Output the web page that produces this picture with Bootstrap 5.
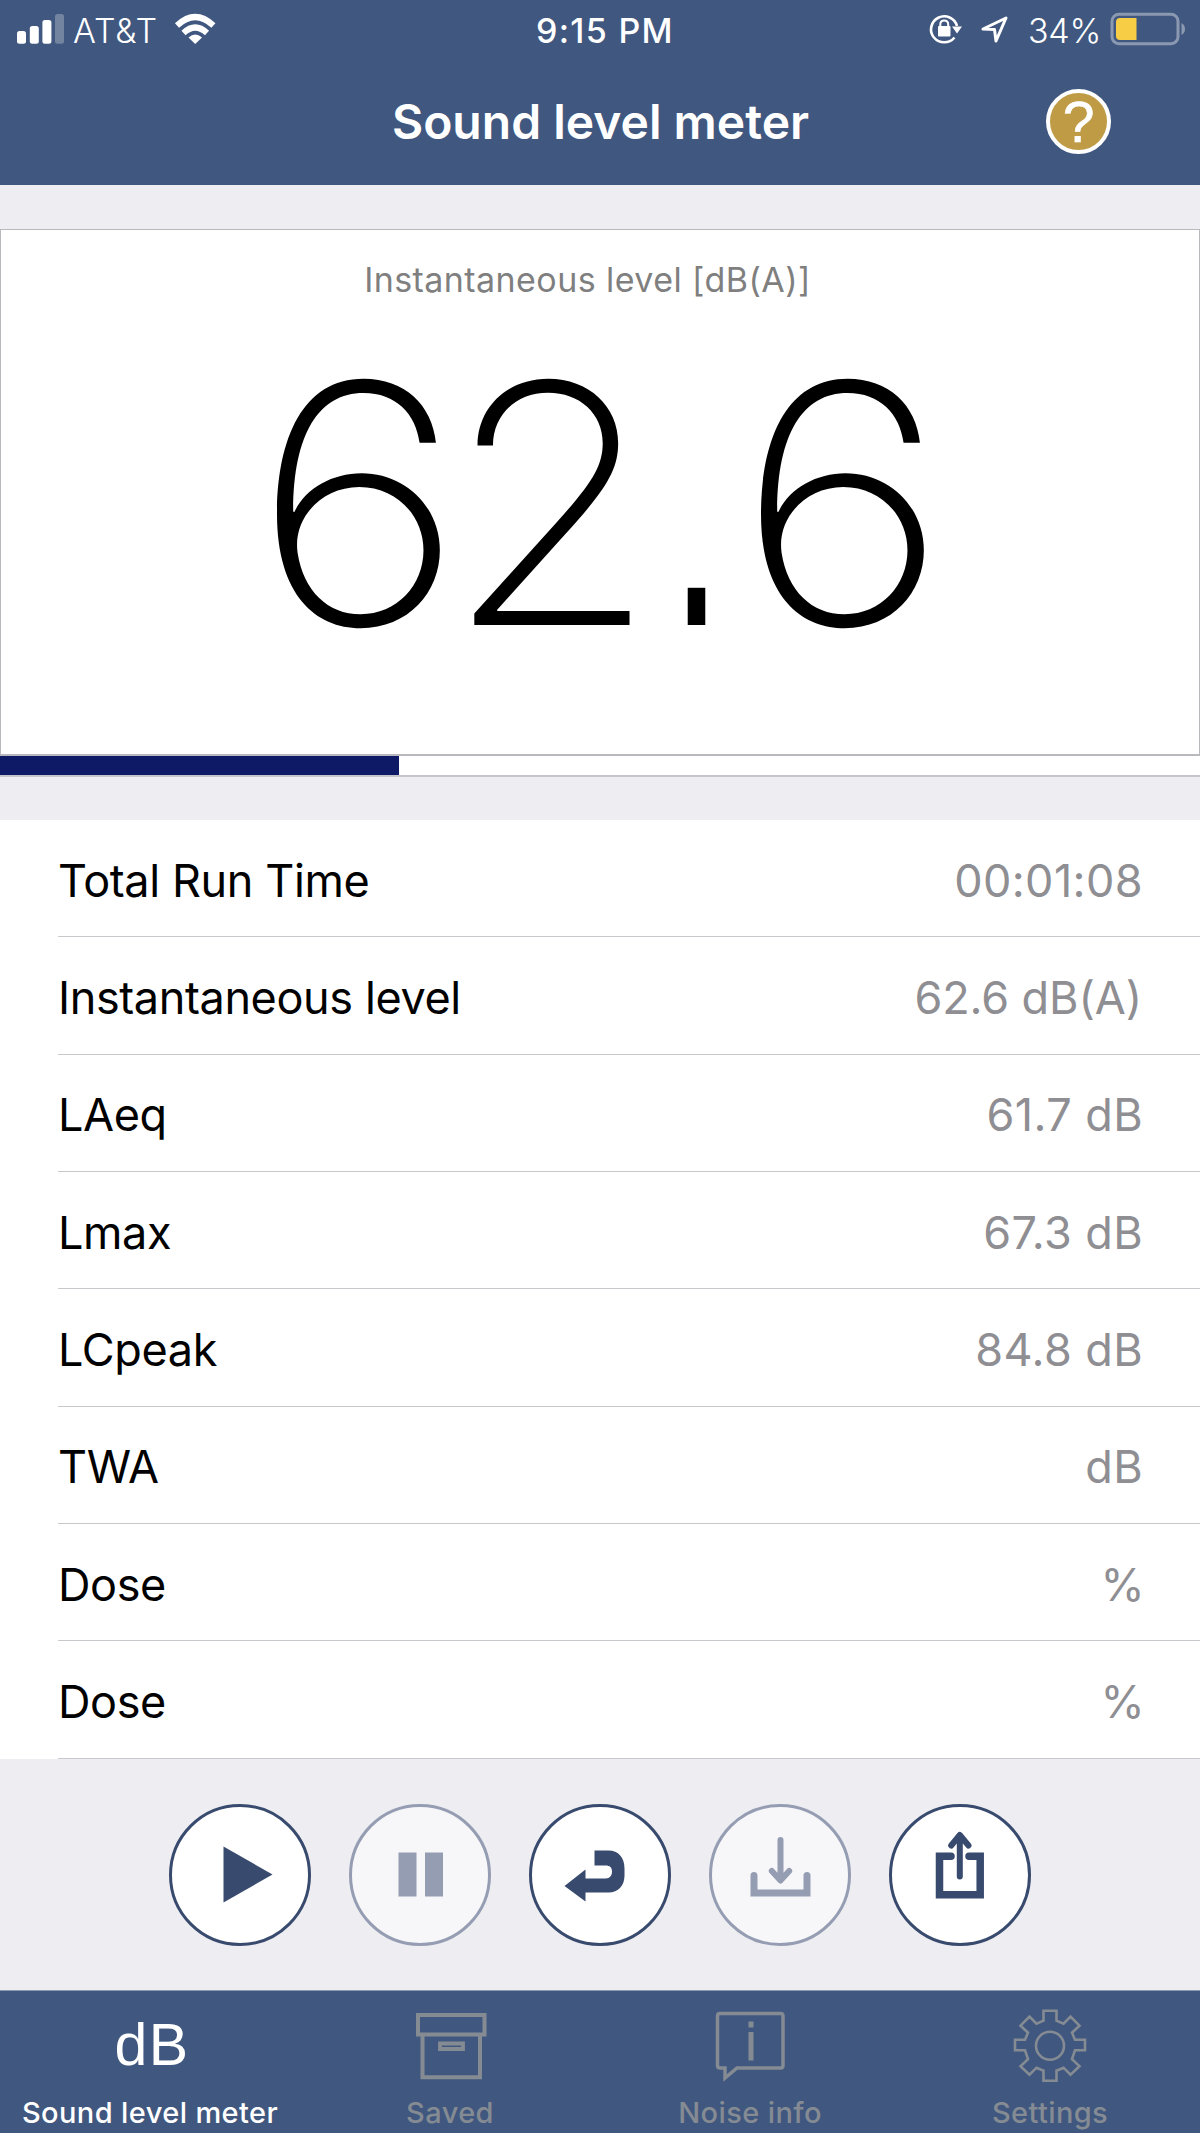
<!DOCTYPE html>
<html lang="en">
<head>
<meta charset="utf-8">
<meta name="viewport" content="width=device-width, initial-scale=1">
<title>Sound level meter</title>
<link href="https://cdn.jsdelivr.net/npm/bootstrap@5.3.0/dist/css/bootstrap.min.css" rel="stylesheet">
<style>
  :root { --navy: #40577f; --ink: #384a6e; --canvas: #eeedf2; --rule: #c8c7cc; }
  body { font-family: Inter, "Liberation Sans", sans-serif; background: var(--canvas); color: #000; }
  .screen { width: 1200px; height: 2133px; overflow: hidden; }
  svg { display: block; flex: none; }
  .app-head { height: 185px; background: var(--navy); color: #fff; }
  .status { height: 60px; font-size: 34px; line-height: 60px; padding: 0 15px 0 17px; }
  .status > div { width: 33.333%; }
  .status span { padding-top: 1px; }
  .carrier { font-weight: 300; letter-spacing: .9px; margin: 0 16px 0 8px; }
  .battery-text { font-weight: 300; letter-spacing: -.3px; margin: 0 8px 0 18px; }
  .clock { font-weight: 500; letter-spacing: 1.3px; padding: 1px 0 0 8px; }
  .title-bar { height: 125px; padding-right: 89px; padding-left: 154px; padding-bottom: 2px; }
  .title-bar h1 { font-size: 48px; font-weight: 600; line-height: 60px; padding-left: 1px; }
  .help { width: 65px; height: 65px; border: 4px solid #fff; background: #bf9b45; color: #fff;
          font: 400 57px/58px "Liberation Sans", sans-serif; -webkit-text-stroke: .6px #fff; }
  .gap-band { height: 44px; }
  .reading { height: 527px; border: 1px solid #b9b9bd; border-bottom-width: 2px; border-radius: 0; }
  .caption-text { color: #7f7f7f; font-size: 34px; line-height: 44px; letter-spacing: .43px; padding: 28px 25px 0 0; }
  .digits { font-size: 334px; font-weight: 200; line-height: 400px; height: 400px; margin-top: 2px; }
  .digits span { display: inline-block; width: 193.5px; text-align: center; }
  .digits .six { transform: scaleX(1.09); }
  .digits .two { margin: 0 7px 0 -7px; transform: scaleX(1.04); }
  .digits .point { width: 97px; font: 400 348px/402px "Liberation Sans", sans-serif; transform: scaleX(.53); }
  .level { height: 21px; background: #fff; border-radius: 0; border-bottom: 2px solid #c4c4ca; }
  .level .progress-bar { background: #0f1a67; }
  .band-bottom { height: 43px; }
  .stats { padding-left: 58px; background: #fff; }
  .stats li { height: 117.33px; border-bottom: 1px solid var(--rule); font-size: 45px; line-height: 60px; padding: 5px 57px 0 0; }
  .stats li span:first-child { letter-spacing: -.38px; }
  .stats li span:last-child { color: #8e8e93; letter-spacing: .4px; }
  .stats li span.tight:last-child { letter-spacing: -.1px; padding-right: 1px; }
  .stats li .unit { margin-right: -2px; }
  .controls { gap: 38px; height: 231px; padding-top: 1px; }
  .round-btn { width: 142px; height: 142px; border: 3px solid var(--ink); border-radius: 50%; background: #fff;
               color: var(--ink); padding: 0; }
  .round-btn svg { margin: -.5px; }
  .round-btn:disabled { border: 3px solid #959db3; background: #f7f7fa; color: #959db3; opacity: 1; }
  .tabs { height: 143px; background: var(--navy); border-top: 1px solid #8c9ab3; color: #858b93;
          font-size: 29px; font-weight: 500; letter-spacing: .4px; line-height: 36px; }
  .tabs a { width: 300px; color: inherit; text-decoration: none; }
  .tabs a.active { color: #fff; }
  .tab-icon { height: 104.5px; padding-top: 2px; }
  .db { font: 400 59px/100px "Liberation Sans", sans-serif; letter-spacing: 1.5px; padding: 4px 0 0 4px; }
</style>
<script src="https://cdn.jsdelivr.net/npm/bootstrap@5.3.0/dist/js/bootstrap.bundle.min.js"></script>
</head>
<body>
<main class="screen d-flex flex-column">
  <header class="app-head">
    <div class="status d-flex align-items-center">
      <div class="d-flex align-items-center">
        <svg width="48" height="60" viewBox="17 0 48 60" fill="#fff"><rect x="17" y="31" width="9" height="12.7" rx="2.5"/><rect x="29.8" y="26" width="9" height="17.7" rx="2.5"/><rect x="42.4" y="20" width="9" height="23.7" rx="2.5"/><rect x="55" y="14" width="9" height="29.7" rx="2.5" opacity=".27"/></svg>
        <span class="carrier">AT&amp;T</span>
        <svg width="42" height="60" viewBox="173 0 42 60"><g fill="none" stroke="#fff" stroke-width="6"><path d="M176 25.500Q194.200 8.500 212.400 25.500"/><path d="M182.500 33Q194.200 22 206 33"/></g><path fill="#fff" d="M194.200 44L187.500 37.500Q194.200 31.500 201 37.500Z"/></svg>
      </div>
      <div class="clock text-center">9:15 PM</div>
      <div class="d-flex align-items-center justify-content-end">
        <svg width="82" height="60" viewBox="928 0 82 60"><path d="M954.500 37.500A13.200 13 0 1 1 957 26" fill="none" stroke="#fff" stroke-width="2.600"/><path d="M952 26.500H962L957 33.500Z" fill="#fff"/><rect x="938" y="26" width="12.500" height="10.500" rx="1" fill="#fff"/><path d="M940.300 27V24.500Q940.300 20.500 944.200 20.500T948.200 24.500V27" fill="none" stroke="#fff" stroke-width="2"/><path d="M983 29L1006 18L996 41L994.500 29.500Z" fill="none" stroke="#fff" stroke-width="3" stroke-linejoin="round"/></svg>
        <span class="battery-text">34%</span>
        <svg width="76" height="60" viewBox="1109 0 76 60"><rect x="1112" y="14.200" width="66" height="29.500" rx="7" fill="none" stroke="#8b98b1" stroke-width="3"/><path d="M1181.500 23Q1185 25 1185 29T1181.500 35Z" fill="#8b98b1"/><path d="M1136.500 18V40H1120Q1116 40 1116 36V22Q1116 18 1120 18Z" fill="#f8cd46"/></svg>
      </div>
    </div>
    <div class="title-bar d-flex align-items-center justify-content-between">
      <h1 class="m-0 flex-grow-1 text-center">Sound level meter</h1>
      <div class="help rounded-circle text-center">?</div>
    </div>
  </header>
  <div class="gap-band"></div>
  <section class="card reading">
    <div class="caption-text text-center">Instantaneous level [dB(A)]</div>
    <div class="digits d-flex justify-content-center"><span class="six">6</span><span class="two">2</span><span class="point">.</span><span class="six">6</span></div>
  </section>
  <div class="progress level"><div class="progress-bar" style="width:33.25%"></div></div>
  <div class="band-bottom"></div>
  <ul class="stats list-unstyled m-0">
    <li class="d-flex justify-content-between align-items-center"><span>Total Run Time</span><span>00:01:08</span></li>
    <li class="d-flex justify-content-between align-items-center"><span>Instantaneous level</span><span class="tight">62.6 dB(A)</span></li>
    <li class="d-flex justify-content-between align-items-center"><span>LAeq</span><span>61.7 dB</span></li>
    <li class="d-flex justify-content-between align-items-center"><span>Lmax</span><span>67.3 dB</span></li>
    <li class="d-flex justify-content-between align-items-center"><span>LCpeak</span><span>84.8 dB</span></li>
    <li class="d-flex justify-content-between align-items-center"><span>TWA</span><span>dB</span></li>
    <li class="d-flex justify-content-between align-items-center"><span>Dose</span><span class="unit">%</span></li>
    <li class="d-flex justify-content-between align-items-center"><span>Dose</span><span class="unit">%</span></li>
  </ul>
  <div class="controls d-flex justify-content-center align-items-center">
    <button class="round-btn" aria-label="Start"><svg width="137" height="137" viewBox="-68.500 -68.500 137 137" fill="currentColor"><path d="M-17 -28L32 0L-17 28Z"/></svg></button>
    <button class="round-btn" aria-label="Pause" disabled><svg width="137" height="137" viewBox="-68.500 -68.500 137 137" fill="currentColor"><path d="M-22 -22H-4V22H-22ZM4.500 -22H22.500V22H4.500Z"/></svg></button>
    <button class="round-btn" aria-label="Reset"><svg width="137" height="137" viewBox="-68.500 -68.500 137 137" fill="currentColor"><path d="M-6 -24H8C18 -24 24 -17 24 -6V1C24 11 18 18 8 18H-15V27L-36 11.500L-15 -5V4H5C9.500 4 11.500 1 11.500 -3C11.500 -7 9.500 -9 5 -9H-6Z"/></svg></button>
    <button class="round-btn" aria-label="Save" disabled><svg width="137" height="137" viewBox="-68.500 -68.500 137 137" fill="none" stroke="currentColor" stroke-linecap="round"><path stroke-width="7" d="M-26.500 1V18.500H26.500V1"/><path stroke-width="6" stroke-linejoin="round" d="M0 -34.500V5.500M-8.700 -3.500L0 6L8.700 -3.500"/></svg></button>
    <button class="round-btn" aria-label="Share"><svg width="137" height="137" viewBox="-68.500 -68.500 137 137" fill="none" stroke="currentColor" stroke-linecap="round"><path stroke-width="7.500" d="M-9.500 -18.300H-21V20.200H19.700V-18.300H8.500"/><path stroke-width="6" stroke-linejoin="round" d="M-.7 2V-38M-9.300 -29L-.7 -39.500L8 -29"/></svg></button>
  </div>
  <nav class="tabs d-flex text-center">
    <a class="active" href="#"><div class="tab-icon db">dB</div>Sound level meter</a>
    <a href="#"><div class="tab-icon d-flex justify-content-center"><svg width="74" height="92" viewBox="413 1993 74 92" fill="none" stroke="currentColor" stroke-width="4"><path d="M418 2015H484.500V2034.500H418ZM422.500 2034.500V2077.200H480V2034.500"/><path d="M440 2043.500H463V2049H440Z" stroke-width="3.800"/></svg></div>Saved</a>
    <a href="#"><div class="tab-icon d-flex justify-content-center"><svg width="72" height="92" viewBox="714 1993 72 92" fill="none" stroke="currentColor" stroke-width="3.500"><path d="M720 2013.500H780.500Q783 2013.500 783 2016V2065.500Q783 2068 780.500 2068H737L725 2078V2068H720Q717.500 2068 717.500 2065.500V2016Q717.500 2013.500 720 2013.500Z"/><path d="M751 2021.500V2027.500M751 2032V2060.500" stroke-width="5"/></svg></div>Noise info</a>
    <a href="#"><div class="tab-icon d-flex justify-content-center"><svg width="76" height="92" viewBox="-38 -52.700 76 92" fill="none" stroke="currentColor" stroke-width="2.600"><circle r="14"/><path d="M-6.500 -35H6.500V-25L13.500 -22L20.500 -29L29.500 -20L22 -13L25 -6H35V4.500H25L22 13.500L29.500 20.500L20.500 29L13.500 22L6.500 25V35H-6.500V25L-13.500 22L-20.500 29L-29.500 20.500L-22 13.500L-25 4.500H-35V-6H-25L-22 -13L-29.500 -20L-20.500 -29L-13.500 -22L-6.500 -25Z"/></svg></div>Settings</a>
  </nav>
</main>
</body>
</html>
